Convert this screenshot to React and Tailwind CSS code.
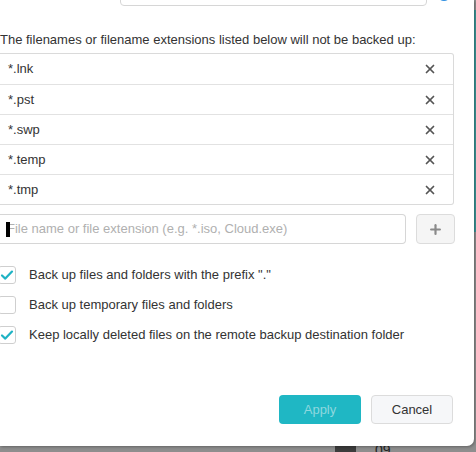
import { Plus, X } from "lucide-react";

const patterns = ["*.lnk", "*.pst", "*.swp", "*.temp", "*.tmp"];

const options = [
  { label: 'Back up files and folders with the prefix "."', checked: true },
  { label: "Back up temporary files and folders", checked: false },
  { label: "Keep locally deleted files on the remote backup destination folder", checked: true },
];

const Check = ({ checked }) => (
  <span className="-ml-[2px] flex h-[18px] w-[18px] shrink-0 items-center justify-center rounded-[3px] border border-[#cfcfcf] bg-white">
    {checked && (
      <svg width="14" height="14" viewBox="0 0 14 14" fill="none">
        <path d="M2 7.5 5.3 10.6 12 3.6" stroke="#1fb3c4" strokeWidth="2.2" strokeLinecap="round" strokeLinejoin="round" />
      </svg>
    )}
  </span>
);

const App = () => {
  return (
    <div
      className="relative h-[452px] w-[476px] overflow-hidden bg-[#8e8e8e]"
      style={{ fontFamily: '"Liberation Sans", Arial, sans-serif' }}
    >
      {/* window behind the dialog */}
      <div className="absolute right-0 top-[10px] h-[222px] w-[2px] bg-[#3b9597]" />
      <div className="absolute bottom-0 left-[335px] h-[6px] w-[21px] bg-[#3c3c3c]" />
      <div className="absolute bottom-[-9px] left-[375px] text-[14px] text-[#222]">09</div>

      <div className="relative h-[446px] w-[474px] overflow-hidden rounded-br-[7px] bg-white text-[13px] text-[#333] shadow-[1px_1px_3px_rgba(0,0,0,0.3)]">
        {/* top row (mostly scrolled out) */}
        <div className="-mt-[24px] flex h-[30px] items-center">
          <span className="w-[120px] pl-[64px] text-[13px]">Name (p)</span>
          <div className="h-[30px] w-[307px] rounded-[4px] border border-[#d6d6d6]" />
          <span className="ml-[10px] mt-[6px] h-[14px] w-[14px] rounded-full bg-[#2d8ee0]" />
        </div>

        <p className="mt-[26px] leading-[16px]">
          The filenames or filename extensions listed below will not be backed up:
        </p>

        <div className="mt-[5px] w-[454px] rounded-r-[3px] border border-l-0 border-[#dadada]">
          {patterns.map((p, i) => (
            <div
              key={p}
              className={`flex h-[30px] items-center justify-between pl-[8px] pr-[16px] ${i > 0 ? "border-t border-[#e2e2e2]" : ""}`}
            >
              <span>{p}</span>
              <X className="h-[14px] w-[14px] text-[#555]" strokeWidth={3} />
            </div>
          ))}
        </div>

        <div className="mt-[9px] flex gap-[10px]">
          <div className="relative flex h-[30px] w-[406px] items-center rounded-r-[4px] border border-l-0 border-[#d6d6d6] pl-[7px] text-[#b0b0b0]">
            <span className="absolute left-[6px] top-[7px] h-[15px] w-[4px] bg-black" />
            File name or file extension (e.g. *.iso, Cloud.exe)
          </div>
          <button className="flex h-[30px] w-[39px] items-center justify-center rounded-[4px] border border-[#dcdcdc] bg-[#f5f5f5]">
            <Plus className="h-[15px] w-[15px] text-[#8a8a8a]" strokeWidth={3.5} />
          </button>
        </div>

        <div className="mt-[22px] flex flex-col gap-[12px]">
          {options.map((o) => (
            <label key={o.label} className="flex h-[18px] items-center gap-[13px]">
              <Check checked={o.checked} />
              <span>{o.label}</span>
            </label>
          ))}
        </div>

        <div className="mt-[51px] flex justify-end gap-[10px] pr-[21px]">
          <button className="h-[29px] w-[82px] rounded-[4px] bg-[#1fb7c4] text-[13px] text-[#8ed8df]">
            Apply
          </button>
          <button className="h-[29px] w-[82px] rounded-[4px] border border-[#dcdcdc] bg-[#f6f7f9] text-[13px] text-[#333]">
            Cancel
          </button>
        </div>
      </div>
    </div>
  );
};

export default App;
